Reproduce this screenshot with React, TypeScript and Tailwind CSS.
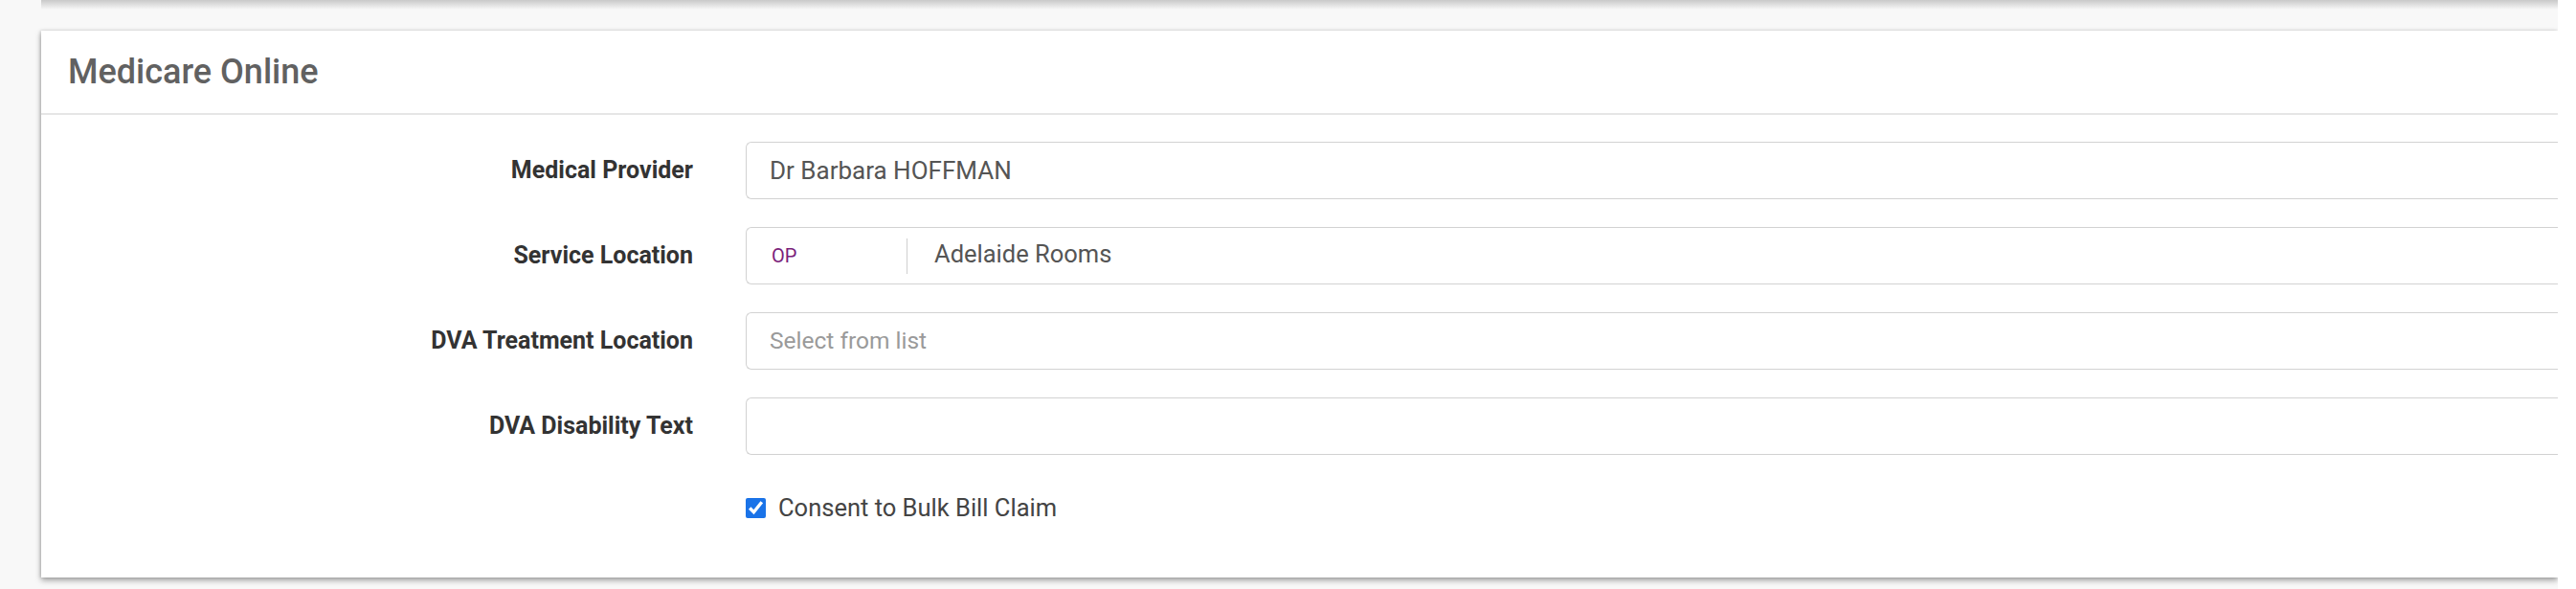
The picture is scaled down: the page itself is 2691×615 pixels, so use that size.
import type { ReactNode } from 'react'

const font = { fontFamily: 'Roboto, "Liberation Sans", Arial, sans-serif' }

function FieldRow({ label, children }: { label: string; children: ReactNode }) {
  return (
    <div className="flex h-[60px] items-center">
      <label className="w-[681px] shrink-0 text-right text-[25px] font-bold text-[#333]">
        {label}
      </label>
      <div className="ml-[55px] flex h-full flex-1 items-center rounded-l-[6px] border border-r-0 border-[#d2d2d2] bg-white">
        {children}
      </div>
    </div>
  )
}

export default function App() {
  return (
    <div style={font} className="flex h-[615px] w-full overflow-hidden bg-[#f8f8f8]">
      <div className="w-[43px] shrink-0" />

      <div className="flex w-[2629px] shrink-0 flex-col">
        {/* bottom edge of the card above */}
        <div className="h-[10px] bg-gradient-to-b from-[#c9c9c9] to-[#f8f8f8]" />
        <div className="h-[22px]" />

        {/* Medicare Online card */}
        <section className="flex h-[571px] flex-col bg-white shadow-[0_3px_6px_rgba(0,0,0,0.35),-1px_0_3px_rgba(0,0,0,0.15)]">
          <header className="flex h-[88px] items-center border-b-2 border-[#e6e6e6] pl-[28px]">
            <h2 className="text-[36px] font-medium text-[#616161]">Medicare Online</h2>
          </header>

          <div className="flex flex-col gap-[29px] pt-[28px]">
            <FieldRow label="Medical Provider">
              <span className="pl-[24px] text-[26px] text-[#555]">Dr Barbara HOFFMAN</span>
            </FieldRow>

            <FieldRow label="Service Location">
              <span className="w-[167px] shrink-0 pl-[26px] text-[20px] text-[#7b1f7b]">OP</span>
              <span className="h-[37px] w-px bg-[#cfcfcf]" />
              <span className="-mt-[4px] pl-[28px] text-[25.5px] text-[#555]">Adelaide Rooms</span>
            </FieldRow>

            <FieldRow label="DVA Treatment Location">
              <span className="pl-[24px] text-[24.5px] text-[#9a9a9a]">Select from list</span>
            </FieldRow>

            <FieldRow label="DVA Disability Text">
              <span />
            </FieldRow>

            <div className="-mt-[4px] flex h-[60px] items-center">
              <div className="w-[681px] shrink-0" />
              <label className="ml-[55px] flex items-center gap-[13px] text-[25.5px] text-[#444]">
                <input
                  type="checkbox"
                  defaultChecked
                  className="h-[21px] w-[21px] accent-[#1a73e8]"
                />
                Consent to Bulk Bill Claim
              </label>
            </div>
          </div>
        </section>
      </div>

      <div className="flex-1 bg-white" />
    </div>
  )
}
